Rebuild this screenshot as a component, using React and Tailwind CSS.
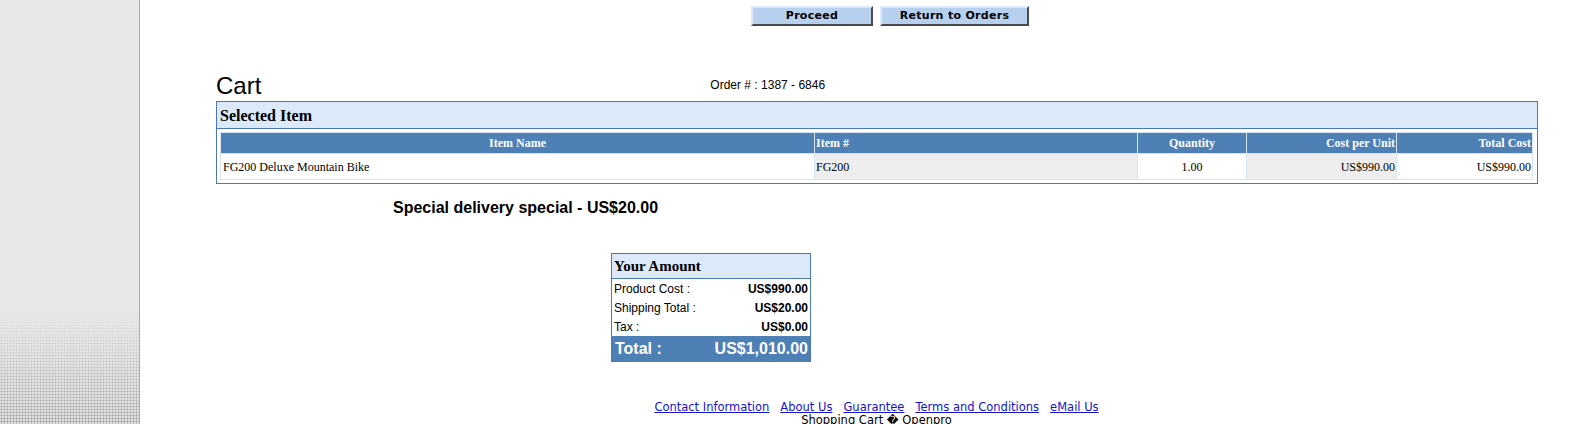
import React from 'react'

const COLS = [
  { label: 'Item Name', w: 593, align: 'text-center' },
  { label: 'Item #', w: 322, align: 'text-left' },
  { label: 'Quantity', w: 108, align: 'text-center' },
  { label: 'Cost per Unit', w: 149, align: 'text-right' },
  { label: 'Total Cost', w: 135, align: 'text-right' },
]

const ROW = [
  { v: 'FG200 Deluxe Mountain Bike', cls: 'bg-white text-left pl-[2px]' },
  { v: 'FG200', cls: 'bg-[#eeeeee] text-left pl-[1px]' },
  { v: '1.00', cls: 'bg-white text-center' },
  { v: 'US$990.00', cls: 'bg-[#eeeeee] text-right pr-[1px]' },
  { v: 'US$990.00', cls: 'bg-white text-right pr-[1px]' },
]

const AMOUNTS = [
  ['Product Cost :', 'US$990.00'],
  ['Shipping Total :', 'US$20.00'],
  ['Tax :', 'US$0.00'],
]

const LINKS = ['Contact Information', 'About Us', 'Guarantee', 'Terms and Conditions', 'eMail Us']

function Button({ children, w }) {
  return (
    <button
      className={`${w} h-[20px] bg-[#b7d0ee] border-2 border-t-[#dce9f9] border-l-[#dce9f9] border-b-[#4a4a4a] border-r-[#4a4a4a] font-['DejaVu_Sans',sans-serif] font-bold text-[11px] leading-[14px] text-black tracking-[0.3px]`}
    >
      {children}
    </button>
  )
}

export default function App() {
  return (
    <div className="flex h-[424px] overflow-hidden bg-white">
      <div className="w-[140px] shrink-0 border-r border-[#a9a9a9] bg-[#e8e8e8] flex flex-col">
        <div className="flex-1" />
        <div className="relative h-[115px] bg-[#dedede] bg-[radial-gradient(circle,#9c9c9c_0.9px,transparent_1.1px)] bg-size-[3px_3px]">
          <div className="absolute inset-0 bg-linear-to-b from-[#e8e8e8] via-[#e8e8e8]/50 to-transparent" />
        </div>
      </div>

      <div className="flex-1 font-['Liberation_Sans',Arial,sans-serif] text-black">
        <div className="pt-[6px] ml-[611px] flex gap-[7px]">
          <Button w="w-[122px]">Proceed</Button>
          <Button w="w-[149px]">Return to Orders</Button>
        </div>

        <div className="mt-[46px] ml-[76px] flex items-start">
          <h1 className="text-[24px] leading-[28px] font-normal">Cart</h1>
          <p className="ml-[449px] mt-[6px] text-[12px] leading-[14px]">Order # : 1387 - 6846</p>
        </div>

        <div className="mt-[1px] ml-[76px] w-[1322px] border border-[#4a7ab0]">
          <div className="h-[27px] bg-[#dce9f8] border-b border-[#4a7ab0] flex items-center pl-[3px] pt-[1px]">
            <span className="font-['Liberation_Serif','Times_New_Roman',serif] font-bold text-[16px] leading-[18px]">Selected Item</span>
          </div>
          <div className="pt-[3px] pb-[3px] pl-[3px]">
            <table className="table-fixed w-[1313px] border-separate border-spacing-[1px] bg-[#d6e4f4] font-['Liberation_Serif','Times_New_Roman',serif] text-[12px]">
              <colgroup>
                {COLS.map((c) => (
                  <col key={c.label} style={{ width: c.w }} />
                ))}
              </colgroup>
              <thead>
                <tr>
                  {COLS.map((c) => (
                    <th key={c.label} className={`h-[20px] p-0 px-[1px] bg-[#4e80b5] text-white font-bold leading-[14px] ${c.align}`}>
                      {c.label}
                    </th>
                  ))}
                </tr>
              </thead>
              <tbody>
                <tr>
                  {ROW.map((r, i) => (
                    <td key={i} className={`h-[25px] p-0 leading-[14px] ${r.cls}`}>
                      {r.v}
                    </td>
                  ))}
                </tr>
              </tbody>
            </table>
          </div>
        </div>

        <p className="mt-[15px] ml-[253px] text-[16px] leading-[18px] font-bold">Special delivery special - US$20.00</p>

        <div className="mt-[36px] ml-[471px] w-[200px] border border-[#4a7ab0]">
          <div className="h-[25px] bg-[#dce9f8] border-b border-[#4a7ab0] flex items-center pl-[2px]">
            <span className="font-['Liberation_Serif','Times_New_Roman',serif] font-bold text-[15px] leading-[17px]">Your Amount</span>
          </div>
          {AMOUNTS.map(([k, v]) => (
            <div key={k} className="h-[19px] flex items-center justify-between px-[2px] text-[12px] leading-[14px]">
              <span>{k}</span>
              <span className="font-bold">{v}</span>
            </div>
          ))}
          <div className="h-[25px] bg-[#4e80b5] flex items-center justify-between px-[2px] text-white font-bold text-[16px] leading-[18px]">
            <span className="pl-[1px]">Total :</span>
            <span>US$1,010.00</span>
          </div>
        </div>

        <div className="mt-[39px] ml-[514px] w-[445px] font-['DejaVu_Sans',Verdana,sans-serif] text-[11.5px] leading-[13px] text-center">
          <div className="flex justify-center gap-[11px]">
            {LINKS.map((l) => (
              <a key={l} href="#" className="text-[#1212d0] underline">
                {l}
              </a>
            ))}
          </div>
          <p>Shopping Cart {'\uFFFD'} Openpro</p>
        </div>
      </div>
    </div>
  )
}
